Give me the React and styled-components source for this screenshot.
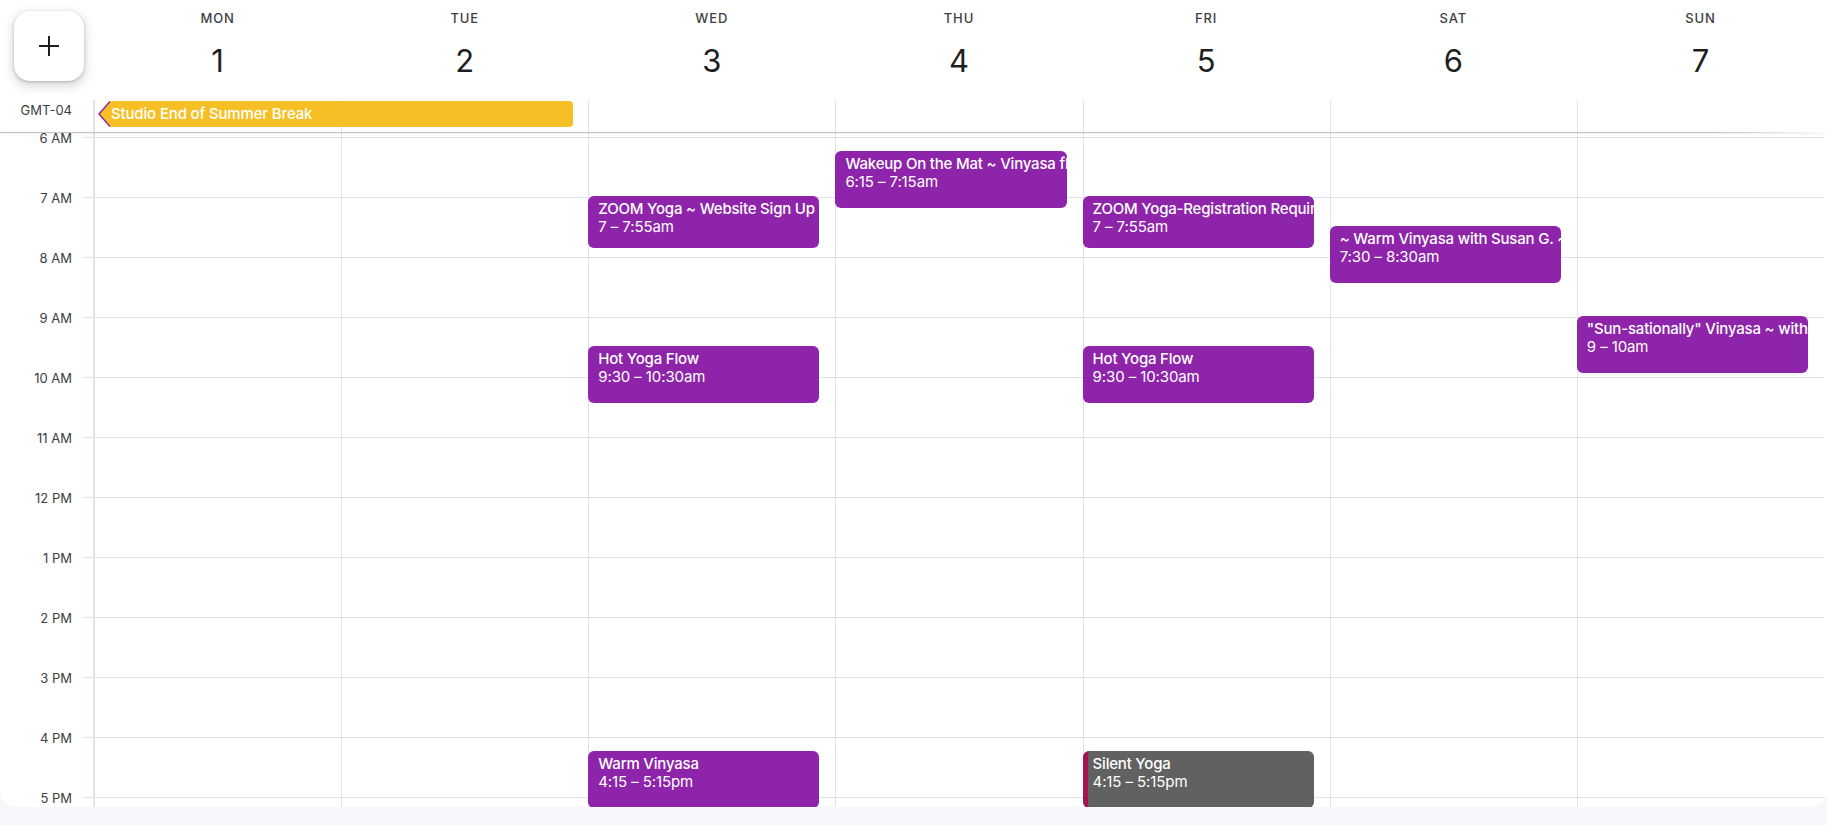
import styled, { createGlobalStyle } from "styled-components";

const GlobalStyle = createGlobalStyle`
  html, body {
    margin: 0;
    padding: 0;
    background: #f6f8fc;
    font-family: Inter, "Noto Sans", Roboto, sans-serif;
    -webkit-font-smoothing: antialiased;
  }
`;

const START_HOUR = 6;
const HOURS = ["6 AM", "7 AM", "8 AM", "9 AM", "10 AM", "11 AM", "12 PM", "1 PM", "2 PM", "3 PM", "4 PM", "5 PM"];
const DAYS = [
  { name: "MON", num: 1 },
  { name: "TUE", num: 2 },
  { name: "WED", num: 3 },
  { name: "THU", num: 4 },
  { name: "FRI", num: 5 },
  { name: "SAT", num: 6 },
  { name: "SUN", num: 7 },
];

const EVENTS = [
  { day: 2, start: "7:00", end: "7:55", title: "ZOOM Yoga ~ Website Sign Up", time: "7 – 7:55am" },
  { day: 2, start: "9:30", end: "10:30", title: "Hot Yoga Flow", time: "9:30 – 10:30am" },
  { day: 2, start: "16:15", end: "17:15", title: "Warm Vinyasa", time: "4:15 – 5:15pm" },
  { day: 3, start: "6:15", end: "7:15", title: "Wakeup On the Mat ~ Vinyasa flow", time: "6:15 – 7:15am" },
  { day: 4, start: "7:00", end: "7:55", title: "ZOOM Yoga-Registration Required", time: "7 – 7:55am" },
  { day: 4, start: "9:30", end: "10:30", title: "Hot Yoga Flow", time: "9:30 – 10:30am" },
  { day: 4, start: "16:15", end: "17:15", title: "Silent Yoga", time: "4:15 – 5:15pm", muted: true },
  { day: 5, start: "7:30", end: "8:30", title: "~ Warm Vinyasa with Susan G. ~", time: "7:30 – 8:30am" },
  { day: 6, start: "9:00", end: "10:00", title: "\"Sun-sationally\" Vinyasa ~ with Amy", time: "9 – 10am" },
];

const toMin = (t) => {
  const [h, m] = t.split(":").map(Number);
  return (h - START_HOUR) * 60 + m;
};

const Panel = styled.div`
  width: 1827px;
  height: 807px;
  background: #ffffff;
  border-radius: 0 0 18px 18px;
  overflow: hidden;
  display: flex;
  flex-direction: column;
`;

const Columns = styled.div`
  display: grid;
  grid-template-columns: 94px repeat(7, 1fr);
  width: 1824px;
  flex-shrink: 0;
`;

const HeadRow = styled(Columns)`
  height: 100px;
`;

const CreateCell = styled.div`
  padding: 11px 0 0 14px;
`;

const CreateButton = styled.button`
  width: 70px;
  height: 70px;
  border: none;
  border-radius: 16px;
  background: #ffffff;
  box-shadow: 0 1px 3px rgba(60, 64, 67, 0.3), 0 4px 8px 3px rgba(60, 64, 67, 0.15);
  display: flex;
  align-items: center;
  justify-content: center;
  color: #1f1f1f;
  padding: 0;
`;

const DayHead = styled.div`
  display: flex;
  flex-direction: column;
  align-items: center;
  padding-top: 11px;
`;

const DayName = styled.div`
  font-size: 13px;
  font-weight: 500;
  letter-spacing: 0.9px;
  line-height: 14px;
  color: #3c4043;
`;

const DayNum = styled.div`
  margin-top: 10px;
  font-size: 31px;
  font-weight: 400;
  line-height: 52px;
  color: #1f1f1f;
`;

const AllDayRow = styled(Columns)`
  height: 32px;
`;

const AllDayGutter = styled.div`
  font-size: 13px;
  line-height: 14px;
  color: #3c4043;
  text-align: right;
  padding: 3px 21px 0 0;
  border-right: 1px solid #dde3ea;
  grid-row: 1;
  grid-column: 1;
`;

const AllDayCell = styled.div`
  border-left: 1px solid #dde3ea;
  grid-row: 1;
  grid-column: ${(p) => p.$col};
`;

const AllDayEvent = styled.div`
  grid-row: 1;
  grid-column: ${(p) => p.$from} / span ${(p) => p.$span};
  display: flex;
  height: 26px;
  margin: 1px 15px 0 4px;
  position: relative;
  z-index: 1;
`;

const AllDayBody = styled.div`
  flex: 1;
  background: #f6bf26;
  border-radius: 0 4px 4px 0;
  color: #ffffff;
  font-size: 15px;
  font-weight: 500;
  letter-spacing: -0.15px;
  line-height: 26px;
  padding-left: 1px;
  white-space: nowrap;
  overflow: hidden;
`;

const Divider = styled.div`
  height: 1px;
  flex-shrink: 0;
  background: linear-gradient(to right, #bfc3c7 0%, #bfc3c7 94%, rgba(191, 195, 199, 0) 100%);
  box-shadow: 0 1px 2px rgba(60, 64, 67, 0.12);
  position: relative;
  z-index: 2;
`;

const Body = styled(Columns)`
  flex: 1 1 auto;
  min-height: 0;
  overflow: hidden;
  padding-top: 4px;
  margin-top: -4px;
`;

const Gutter = styled.div`
  padding-top: 4px;
  border-right: 1px solid #dde3ea;
`;

const HourLabel = styled.div`
  height: 60px;
  position: relative;
  font-size: 13px;
  line-height: 14px;
  color: #3c4043;
  text-align: right;
  padding-right: 21px;

  span {
    display: block;
    transform: translateY(-6px);
  }

  &::after {
    content: "";
    position: absolute;
    top: 0;
    right: 0;
    width: 10px;
    border-top: 1px solid #dde3ea;
  }
`;

const DayColumn = styled.div`
  position: relative;
  padding-top: 4px;
  border-left: 1px solid #dde3ea;
  &:first-of-type {
    border-left: none;
  }
`;

const HourCell = styled.div`
  height: 60px;
  box-sizing: border-box;
  border-top: 1px solid #dde3ea;
`;

const EventCard = styled.div`
  position: absolute;
  left: -1px;
  right: 16px;
  box-sizing: border-box;
  padding: 4px 0 0 ${(p) => (p.$muted ? "5px" : "10px")};
  border-radius: 6px;
  background: ${(p) => (p.$muted ? "#616161" : "#8e24aa")};
  border-left: ${(p) => (p.$muted ? "5px solid #a3154f" : "none")};
  color: #ffffff;
  font-size: 15px;
  line-height: 18px;
  overflow: hidden;
  white-space: nowrap;
  z-index: 1;
`;

const EventTitle = styled.div`
  font-weight: 500;
  letter-spacing: -0.2px;
  overflow: hidden;
`;

const EventTime = styled.div`
  font-weight: 400;
  letter-spacing: -0.1px;
`;

const PlusIcon = () => (
  <svg width="22" height="22" viewBox="0 0 22 22">
    <path d="M11 1v20M1 11h20" stroke="currentColor" strokeWidth="2" fill="none" />
  </svg>
);

const ContinueArrow = () => (
  <svg width="12" height="26" viewBox="0 0 12 26">
    <polygon points="12,0 0.8,13 12,26" fill="#f6bf26" />
    <polyline points="12,0.5 1,13 12,25.5" fill="none" stroke="#8e24aa" strokeWidth="1.4" />
  </svg>
);

const App = () => {
  return (
    <>
      <GlobalStyle />
      <Panel>
        <HeadRow>
          <CreateCell>
            <CreateButton aria-label="Create">
              <PlusIcon />
            </CreateButton>
          </CreateCell>
          {DAYS.map((d) => (
            <DayHead key={d.name}>
              <DayName>{d.name}</DayName>
              <DayNum>{d.num}</DayNum>
            </DayHead>
          ))}
        </HeadRow>

        <AllDayRow>
          <AllDayGutter>GMT-04</AllDayGutter>
          {DAYS.map((d, i) => (
            <AllDayCell key={d.name} $col={i + 2} />
          ))}
          <AllDayEvent $from={2} $span={2}>
            <ContinueArrow />
            <AllDayBody>Studio End of Summer Break</AllDayBody>
          </AllDayEvent>
        </AllDayRow>

        <Divider />

        <Body>
          <Gutter>
            {HOURS.map((h) => (
              <HourLabel key={h}>
                <span>{h}</span>
              </HourLabel>
            ))}
          </Gutter>
          {DAYS.map((d, i) => (
            <DayColumn key={d.name}>
              {HOURS.map((h) => (
                <HourCell key={h} />
              ))}
              {EVENTS.filter((e) => e.day === i).map((e) => {
                const top = 4 + toMin(e.start) - 1;
                const height = toMin(e.end) - toMin(e.start) - 3;
                return (
                  <EventCard key={e.title + e.start} $muted={e.muted} style={{ top, height }}>
                    <EventTitle>{e.title}</EventTitle>
                    <EventTime>{e.time}</EventTime>
                  </EventCard>
                );
              })}
            </DayColumn>
          ))}
        </Body>
      </Panel>
    </>
  );
};

export default App;
